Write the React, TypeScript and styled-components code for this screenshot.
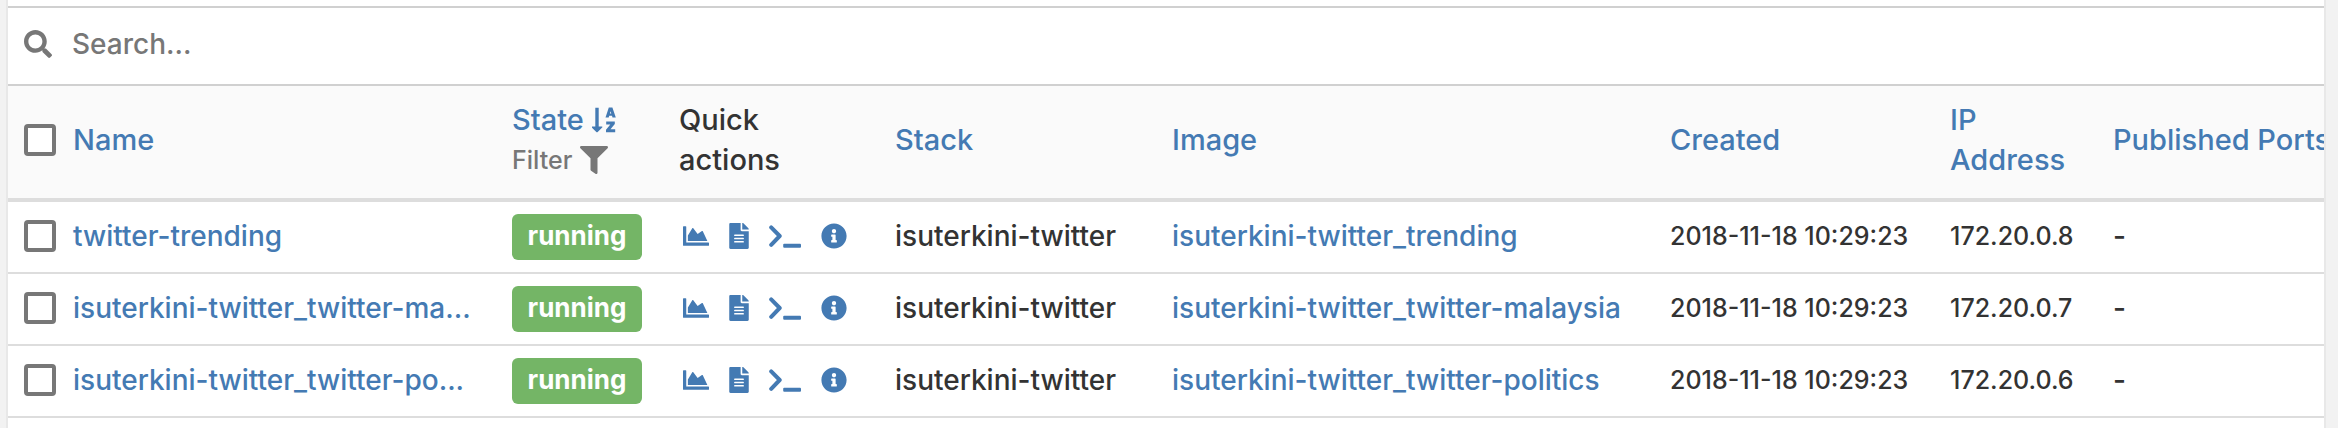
import React from "react";
import styled, { createGlobalStyle } from "styled-components";
import { FaChartArea, FaFileAlt, FaFilter, FaInfoCircle, FaSearch } from "react-icons/fa";

const Global = createGlobalStyle`
  *, *::before, *::after { box-sizing: border-box; }
  body { margin: 0; background: #f2f2f2; color: #333; font: 500 28px/40px Inter, "Liberation Sans", sans-serif; }
`;

const Panel = styled.section`
  margin: 0 12px 0 6px;
  min-height: 100vh;
  padding-top: 6px;
  background: #fff;
  border: solid #e8e8e8;
  border-width: 0 2px;
  overflow: hidden;
`;

const SearchBar = styled.label`
  display: flex;
  align-items: center;
  gap: 20px;
  height: 80px;
  padding: 0 16px 4px;
  border: solid #d0d0d0;
  border-width: 2px 0;
  color: #777;
`;

const SearchInput = styled.input`
  flex: 1;
  padding: 0;
  border: 0;
  outline: 0;
  background: none;
  color: #333;
  font: inherit;
  &::placeholder { color: #777; opacity: 1; }
`;

const Table = styled.table`
  width: 100%;
  table-layout: fixed;
  border-collapse: separate;
  border-spacing: 0;
`;

const Col = styled.col<{ $w?: number }>`
  width: ${(p) => (p.$w ? `${p.$w}px` : "auto")};
`;

const Th = styled.th`
  height: 116px;
  padding: 0 16px 4px;
  background: #fafafa;
  border-bottom: 4px solid #ddd;
  font-size: 29px;
  font-weight: 500;
  text-align: left;
  white-space: nowrap;
`;

const Td = styled.td<{ $figures?: boolean }>`
  height: 72px;
  padding: 0 16px 2px;
  border-bottom: 2px solid #ddd;
  font-size: ${(p) => (p.$figures ? 25 : 28)}px;
  white-space: nowrap;
`;

const NameCell = styled.div`
  display: flex;
  align-items: center;
  gap: 17px;
`;

const Check = styled.input`
  appearance: none;
  flex: none;
  width: 32px;
  height: 32px;
  margin: 0;
  background: #fff;
  border: 4px solid #777;
  border-radius: 4px;
  &:checked { background: #337ab7; }
`;

const Link = styled.a`
  color: #447ab3;
  text-decoration: none;
`;

const StateLink = styled(Link)`
  display: flex;
  align-items: center;
  gap: 8px;
`;

const FilterButton = styled.button`
  display: flex;
  align-items: center;
  gap: 8px;
  padding: 0;
  border: 0;
  background: none;
  color: #777;
  font: inherit;
  font-size: 25px;
  line-height: 40px;
`;

const Badge = styled.span`
  display: block;
  width: 130px;
  margin-top: 2px;
  padding-bottom: 2px;
  border-radius: 6px;
  background: #74b566;
  color: #fff;
  font-size: 26px;
  font-weight: 700;
  line-height: 44px;
  text-align: center;
`;

const Actions = styled.div`
  display: flex;
  align-items: center;
  gap: 20px;
  padding-left: 4px;
`;

const Action = styled(Link)<{ $w: number }>`
  display: flex;
  svg { width: ${(p) => p.$w}px; height: 26px; }
`;

const TerminalIcon = () => (
  <svg viewBox="0 0 32 26" aria-hidden="true">
    <path
      d="M2.200 4.400L10.700 13L2.200 21.800"
      fill="none"
      stroke="currentColor"
      strokeWidth="4"
      strokeLinecap="round"
      strokeLinejoin="round"
    />
    <rect x="14.200" y="20.800" width="17.800" height="4" rx="1" fill="currentColor" />
  </svg>
);

const SortIcon = () => (
  <svg width="24" height="26" viewBox="0 0 24 26" fill="currentColor" aria-hidden="true">
    <path d="M3.300.8h3.400v18.700h3.300q.8.300.2 1L5.700 25q-.7.600-1.400 0L-.2 20.500q-.5-.7.200-1h3.300z" />
    <path
      fillRule="evenodd"
      d="M16.800.5h3.600L23.800 10.500h-3.300l-.5-1.700h-2.800l-.5 1.700h-3.200zM18.600 4.300l-.7 2.300h1.400z"
    />
    <path d="M14.200 14.500h8.600v2.500l-4.300 5.300h4.700v3H14v-2.500l4.300-5.300h-4.100z" />
  </svg>
);

const rows = [
  { name: "twitter-trending", image: "isuterkini-twitter_trending", ip: "172.20.0.8" },
  { name: "isuterkini-twitter_twitter-ma...", image: "isuterkini-twitter_twitter-malaysia", ip: "172.20.0.7" },
  { name: "isuterkini-twitter_twitter-po...", image: "isuterkini-twitter_twitter-politics", ip: "172.20.0.6" },
];

const actions = [
  { label: "Stats", Icon: FaChartArea, width: 26 },
  { label: "Logs", Icon: FaFileAlt, width: 20 },
  { label: "Console", Icon: TerminalIcon, width: 32 },
  { label: "Inspect", Icon: FaInfoCircle, width: 26 },
];

const widths = [488, 167, 216, 277, 498, 280, 163, undefined];

export default function App() {
  return (
    <>
      <Global />
      <Panel>
        <SearchBar>
          <FaSearch size={28} aria-hidden="true" />
          <SearchInput type="text" placeholder="Search..." aria-label="Search" />
        </SearchBar>
        <Table>
          <colgroup>
            {widths.map((w, i) => (
              <Col key={i} $w={w} />
            ))}
          </colgroup>
          <thead>
            <tr>
              <Th>
                <NameCell>
                  <Check type="checkbox" aria-label="Select all" />
                  <Link href="#name">Name</Link>
                </NameCell>
              </Th>
              <Th>
                <StateLink href="#state">State <SortIcon /></StateLink>
                <FilterButton type="button">Filter <FaFilter size={28} aria-hidden="true" /></FilterButton>
              </Th>
              <Th>Quick<br />actions</Th>
              <Th><Link href="#stack">Stack</Link></Th>
              <Th><Link href="#image">Image</Link></Th>
              <Th><Link href="#created">Created</Link></Th>
              <Th><Link href="#ip">IP<br />Address</Link></Th>
              <Th><Link href="#ports">Published Ports</Link></Th>
            </tr>
          </thead>
          <tbody>
            {rows.map((r) => (
              <tr key={r.name}>
                <Td>
                  <NameCell>
                    <Check type="checkbox" aria-label={`Select ${r.name}`} />
                    <Link href="#container">{r.name}</Link>
                  </NameCell>
                </Td>
                <Td><Badge>running</Badge></Td>
                <Td>
                  <Actions>
                    {actions.map(({ label, Icon, width }) => (
                      <Action key={label} $w={width} href={`#${label}`} aria-label={label}><Icon /></Action>
                    ))}
                  </Actions>
                </Td>
                <Td>isuterkini-twitter</Td>
                <Td><Link href="#image">{r.image}</Link></Td>
                <Td $figures>2018-11-18 10:29:23</Td>
                <Td $figures>{r.ip}</Td>
                <Td>-</Td>
              </tr>
            ))}
          </tbody>
        </Table>
      </Panel>
    </>
  );
}
